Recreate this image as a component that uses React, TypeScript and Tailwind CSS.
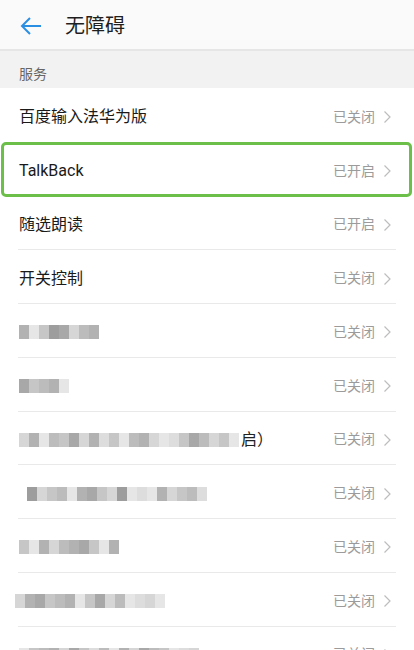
import React from 'react';

const shades = [
  'bg-[#7d7d7d]',
  'bg-[#999999]',
  'bg-[#b3b3b3]',
  'bg-[#c9c9c9]',
  'bg-[#dedede]',
  'bg-[#8c8c8c]',
  'bg-[#a6a6a6]',
  'bg-[#d2d2d2]',
];

type Item = {
  label?: string;
  blur?: { offset: number; cells: number[]; tail?: string };
  on?: boolean;
  active?: boolean;
};

const items: Item[] = [
  { label: '百度输入法华为版' },
  { label: 'TalkBack', on: true, active: true },
  { label: '随选朗读', on: true },
  { label: '开关控制' },
  { blur: { offset: 0, cells: [1, 4, 2, 0, 5, 3, 6, 1] } },
  { blur: { offset: 0, cells: [5, 2, 6, 1, 4] } },
  {
    blur: {
      offset: 0,
      cells: [3, 1, 4, 6, 2, 5, 3, 1, 7, 2, 4, 6, 1, 3, 4, 7, 2, 5, 6, 3, 2, 4],
      tail: '启）',
    },
  },
  { blur: { offset: 8, cells: [0, 3, 2, 6, 4, 1, 5, 2, 3, 0, 4, 7, 4, 1, 3, 2, 6, 7] } },
  { blur: { offset: 0, cells: [2, 4, 1, 3, 6, 1, 5, 2, 4, 1] } },
  { blur: { offset: -4, cells: [3, 1, 5, 2, 6, 1, 4, 2, 5, 3, 6, 4, 7, 3, 4] } },
  { blur: { offset: 0, cells: [4, 2, 6, 1, 3, 5, 2, 7, 6, 4, 1, 3, 5, 6, 2, 4, 7, 3] } },
];

const Chevron = () => (
  <svg width="9" height="14" viewBox="0 0 9 14" className="ml-[8px]">
    <path d="M1.5 1.5 L7 7 L1.5 12.5" fill="none" stroke="#bdbdbd" strokeWidth="1.2" />
  </svg>
);

const Mosaic: React.FC<{ offset: number; cells: number[]; tail?: string }> = ({ offset, cells, tail }) => (
  <div className="flex items-center" style={{ marginLeft: offset }}>
    <div className="flex h-[14px] opacity-75">
      {cells.map((c, i) => (
        <div key={i} className={`w-[10px] h-full ${shades[c]}`} />
      ))}
    </div>
    {tail && <span className="text-[16px] text-[#222] ml-[2px]">{tail}</span>}
  </div>
);

export default function App() {
  return (
    <div
      className="w-[414px] h-[650px] overflow-hidden bg-[#fafafa]"
      style={{ fontFamily: 'Roboto, "Noto Sans CJK SC", sans-serif' }}
    >
      <div className="h-[51px] flex items-center pt-[2px] bg-[#fafafa] border-b-[2px] border-[#e6e6e6]">
        <svg width="24" height="20" viewBox="0 0 24 20" className="ml-[19px]">
          <path d="M22 10 H3 M11 2 L3 10 L11 18" fill="none" stroke="#2a8fe3" strokeWidth="2" />
        </svg>
        <span className="ml-[22px] text-[20px] text-[#1f1f1f]">无障碍</span>
      </div>

      <div className="h-[37px] flex items-center pt-[9px] px-[19px] bg-[#f2f2f2] text-[14px] text-[#666]">
        服务
      </div>

      <div className="bg-white">
        {items.map((it, i) => (
          <div key={i} className="relative h-[53.75px] flex items-center pt-[5px] pl-[19px] pr-[22px]">
            {i > 0 && !it.active && !items[i - 1].active && (
              <div className="absolute top-0 left-[18px] right-[18px] h-px bg-[#e9e9e9]" />
            )}
            {it.active && (
              <div className="absolute left-[1px] right-[2px] top-[0px] bottom-[-1px] border-[3px] border-[#6cc04a] rounded-[5px]" />
            )}
            <div className="flex-1 min-w-0">
              {it.label ? (
                <span className="text-[16px] text-[#1a1a1a]">{it.label}</span>
              ) : (
                it.blur && <Mosaic offset={it.blur.offset} cells={it.blur.cells} tail={it.blur.tail} />
              )}
            </div>
            <span className="text-[14px] text-[#9b9b9b]">{it.on ? '已开启' : '已关闭'}</span>
            <Chevron />
          </div>
        ))}
      </div>
    </div>
  );
}
